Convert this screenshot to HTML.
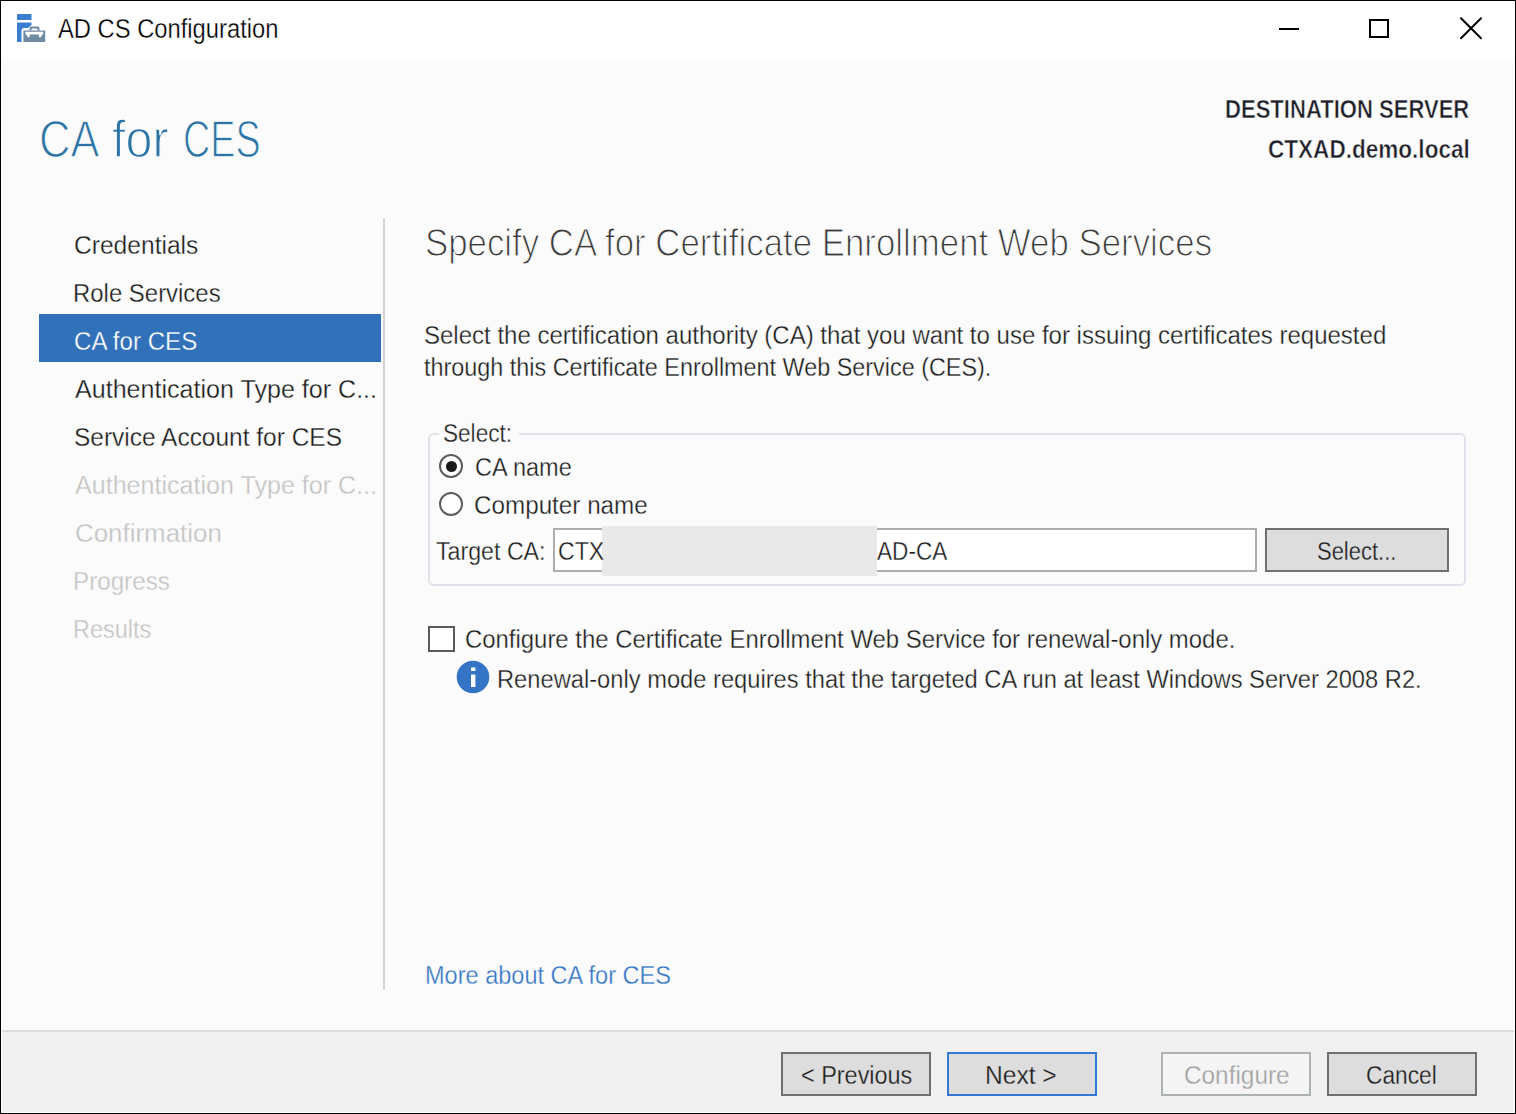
<!DOCTYPE html>
<html><head><meta charset="utf-8"><title>AD CS Configuration</title>
<style>
*{margin:0;padding:0;box-sizing:border-box}
html,body{width:1516px;height:1114px;overflow:hidden;background:#fbfbfb}
body{position:relative;font-family:"Liberation Sans", sans-serif}
.t{position:absolute;white-space:pre;line-height:1;transform-origin:0 0}
.abs{position:absolute}
</style></head>
<body>

<div class="abs" style="left:0;top:0;width:1516px;height:1114px;border:1px solid #000;background:#fbfbfb"></div>
<div class="abs" style="left:1px;top:1px;width:1514px;height:59px;background:#fff"></div>
<div class="abs" style="left:1px;top:60px;width:1px;height:1053px;background:#fff"></div>
<div class="abs" style="left:1514px;top:60px;width:1px;height:1053px;background:#fff"></div>
<div class="abs" style="left:1px;top:1112px;width:1514px;height:1px;background:#fff"></div>
<!-- footer -->
<div class="abs" style="left:2px;top:1030px;width:1512px;height:2px;background:#dcdcdc"></div>
<div class="abs" style="left:2px;top:1032px;width:1512px;height:80px;background:#f0f0f0"></div>
<!-- title icon -->
<svg class="abs" style="left:0;top:0" width="60" height="60" viewBox="0 0 60 60">
  <rect x="17" y="14" width="14.5" height="6" rx="0.6" fill="#3a7ed0"/>
  <path d="M17 22.5 H31.5 V25 L28 28 H24.5 Q21.5 28 21.5 31 V42 H17 Z" fill="#3a7ed0"/>
  <path d="M29.5 30.5 V28.5 Q29.5 26.5 31.5 26.5 H37.5 Q39.5 26.5 39.5 28.5 V30.5 H37.5 V29 Q37.5 28.5 37 28.5 H32 Q31.5 28.5 31.5 29 V30.5 Z" fill="#6f8aa3"/>
  <path d="M23.4 30.4 H45.2 V42 H23.4 Z M25.3 31.8 H43.3 V33.6 L40.6 37.3 H38.9 V34.4 H29.7 V37.3 H28 L25.3 33.6 Z" fill="#6f8aa3" fill-rule="evenodd"/>
</svg>
<!-- window controls -->
<div class="abs" style="left:1279px;top:28px;width:20px;height:2px;background:#000"></div>
<div class="abs" style="left:1369px;top:19px;width:20px;height:19px;border:2px solid #000"></div>
<svg class="abs" style="left:1455px;top:13px" width="32" height="32" viewBox="0 0 32 32">
  <path d="M6 5.3 L26 25.3 M26 5.3 L6 25.3" stroke="#000" stroke-width="2" stroke-linecap="round"/>
</svg>
<!-- nav highlight -->
<div class="abs" style="left:39px;top:314px;width:342px;height:48px;background:#3171b9"></div>
<!-- vertical separator -->
<div class="abs" style="left:383px;top:218px;width:2px;height:772px;background:#d2d2d2"></div>
<!-- group box -->
<div class="abs" style="left:428px;top:432.5px;width:1038px;height:153px;border:2px solid #dde3e8;border-radius:6px"></div>
<div class="abs" style="left:439px;top:428px;width:80px;height:12px;background:#fbfbfb"></div>
<!-- radios -->
<div class="abs" style="left:439px;top:454px;width:24px;height:24px;border:2px solid #5c5c5c;border-radius:50%;background:#fff"></div>
<div class="abs" style="left:445.5px;top:460.5px;width:11px;height:11px;border-radius:50%;background:#1a1a1a"></div>
<div class="abs" style="left:439px;top:492px;width:24px;height:24px;border:2px solid #5c5c5c;border-radius:50%;background:#fff"></div>
<!-- input -->
<div class="abs" style="left:553px;top:528px;width:704px;height:44px;border:2px solid #adadad;background:#fff"></div>
<div class="abs" style="left:602px;top:526px;width:275px;height:50px;background:#e9e9e9"></div>
<!-- select button -->
<div class="abs" style="left:1265px;top:528px;width:184px;height:44px;border:2px solid #707070;background:#dddddd"></div>
<!-- checkbox -->
<div class="abs" style="left:428px;top:626px;width:27px;height:26px;border:2px solid #5a5a5a;background:#fff"></div>
<!-- info icon -->
<svg class="abs" style="left:456px;top:660px" width="34" height="34" viewBox="0 0 34 34">
  <circle cx="17" cy="17" r="16.3" fill="#3474c4"/>
  <rect x="15" y="7.5" width="4.4" height="3.5" fill="#fff"/>
  <rect x="15" y="14.5" width="4.4" height="12.5" fill="#fff"/>
</svg>
<!-- footer buttons -->
<div class="abs" style="left:781px;top:1052px;width:150px;height:44px;border:2px solid #707070;background:#dddddd"></div>
<div class="abs" style="left:947px;top:1052px;width:150px;height:44px;border:2px solid #3279d6;background:#dddddd"></div>
<div class="abs" style="left:1161px;top:1052px;width:150px;height:44px;border:2px solid #adb2b5;background:#f4f4f4"></div>
<div class="abs" style="left:1327px;top:1052px;width:150px;height:44px;border:2px solid #707070;background:#dddddd"></div>

<div id="title" class="t" style="left:57.76px;top:15.54px;font-size:27px;color:#000000;font-weight:400;transform:scaleX(0.8795);-webkit-text-stroke:0.3px #ffffff">AD CS Configuration</div>
<div id="bigCA" class="t" style="left:38.50px;top:114.43px;font-size:51px;color:#2c74a5;font-weight:400;transform:scaleX(0.8530);-webkit-text-stroke:1.3px #fbfbfb">CA</div>
<div id="bigfor" class="t" style="left:112.27px;top:114.43px;font-size:51px;color:#2c74a5;font-weight:400;transform:scaleX(0.9503);-webkit-text-stroke:1.3px #fbfbfb">for</div>
<div id="bigCES" class="t" style="left:182.53px;top:114.43px;font-size:51px;color:#2c74a5;font-weight:400;transform:scaleX(0.7394);-webkit-text-stroke:1.3px #fbfbfb">CES</div>
<div id="dest" class="t" style="left:1225.38px;top:97.21px;font-size:25.5px;color:#1e1e28;font-weight:700;transform:scaleX(0.8649);-webkit-text-stroke:0.5px #fbfbfb">DESTINATION SERVER</div>
<div id="host" class="t" style="left:1268.34px;top:137.21px;font-size:25.5px;color:#1e1e28;font-weight:700;transform:scaleX(0.8845);-webkit-text-stroke:0.5px #fbfbfb">CTXAD.demo.local</div>
<div id="n1" class="t" style="left:74.08px;top:232.29px;font-size:26px;color:#1a1a1a;font-weight:400;transform:scaleX(0.9457);-webkit-text-stroke:0.3px #fbfbfb">Credentials</div>
<div id="n2" class="t" style="left:73.20px;top:280.19px;font-size:26px;color:#1a1a1a;font-weight:400;transform:scaleX(0.9203);-webkit-text-stroke:0.3px #fbfbfb">Role Services</div>
<div id="n3" class="t" style="left:74.12px;top:328.19px;font-size:26px;color:#ffffff;font-weight:400;transform:scaleX(0.9270);-webkit-text-stroke:0.3px #3171b9">CA for CES</div>
<div id="n4" class="t" style="left:75.02px;top:376.19px;font-size:26px;color:#1a1a1a;font-weight:400;transform:scaleX(0.9646);-webkit-text-stroke:0.3px #fbfbfb">Authentication Type for C...</div>
<div id="n5" class="t" style="left:74.49px;top:424.19px;font-size:26px;color:#1a1a1a;font-weight:400;transform:scaleX(0.9414);-webkit-text-stroke:0.3px #fbfbfb">Service Account for CES</div>
<div id="n6" class="t" style="left:75.02px;top:472.19px;font-size:26px;color:#c4c4c4;font-weight:400;transform:scaleX(0.9646);-webkit-text-stroke:0.3px #fbfbfb">Authentication Type for C...</div>
<div id="n7" class="t" style="left:74.99px;top:520.19px;font-size:26px;color:#c4c4c4;font-weight:400;transform:scaleX(0.9966);-webkit-text-stroke:0.3px #fbfbfb">Confirmation</div>
<div id="n8" class="t" style="left:73.18px;top:568.19px;font-size:26px;color:#c4c4c4;font-weight:400;transform:scaleX(0.9307);-webkit-text-stroke:0.3px #fbfbfb">Progress</div>
<div id="n9" class="t" style="left:73.24px;top:616.19px;font-size:26px;color:#c4c4c4;font-weight:400;transform:scaleX(0.9036);-webkit-text-stroke:0.3px #fbfbfb">Results</div>
<div id="head" class="t" style="left:424.72px;top:223.73px;font-size:38px;color:#3a3a3a;font-weight:400;transform:scaleX(0.9164);-webkit-text-stroke:1.1px #fbfbfb">Specify CA for Certificate Enrollment Web Services</div>
<div id="p1" class="t" style="left:423.93px;top:321.79px;font-size:26px;color:#1e1e1e;font-weight:400;transform:scaleX(0.9235);-webkit-text-stroke:0.3px #fbfbfb">Select the certification authority (CA) that you want to use for issuing certificates requested</div>
<div id="p2" class="t" style="left:423.87px;top:353.79px;font-size:26px;color:#1e1e1e;font-weight:400;transform:scaleX(0.8990);-webkit-text-stroke:0.3px #fbfbfb">through this Certificate Enrollment Web Service (CES).</div>
<div id="sel" class="t" style="left:443.37px;top:419.79px;font-size:26px;color:#1e1e1e;font-weight:400;transform:scaleX(0.8684);-webkit-text-stroke:0.3px #fbfbfb">Select:</div>
<div id="r1" class="t" style="left:474.55px;top:454.09px;font-size:26px;color:#1e1e1e;font-weight:400;transform:scaleX(0.9049);-webkit-text-stroke:0.3px #fbfbfb">CA name</div>
<div id="r2" class="t" style="left:473.93px;top:491.99px;font-size:26px;color:#1e1e1e;font-weight:400;transform:scaleX(0.9320);-webkit-text-stroke:0.3px #fbfbfb">Computer name</div>
<div id="tca" class="t" style="left:435.86px;top:537.99px;font-size:26px;color:#1e1e1e;font-weight:400;transform:scaleX(0.8917);-webkit-text-stroke:0.3px #fbfbfb">Target CA:</div>
<div id="ctx" class="t" style="left:557.69px;top:537.89px;font-size:26px;color:#1e1e1e;font-weight:400;transform:scaleX(0.8900);-webkit-text-stroke:0.3px #ffffff">CTX</div>
<div id="adca" class="t" style="left:877.07px;top:537.89px;font-size:26px;color:#1e1e1e;font-weight:400;transform:scaleX(0.8689);-webkit-text-stroke:0.3px #ffffff">AD-CA</div>
<div id="selb" class="t" style="left:1317.05px;top:537.99px;font-size:26px;color:#1e1e1e;font-weight:400;transform:scaleX(0.8445);-webkit-text-stroke:0.3px #dddddd">Select...</div>
<div id="chk" class="t" style="left:464.71px;top:625.69px;font-size:26px;color:#1e1e1e;font-weight:400;transform:scaleX(0.9196);-webkit-text-stroke:0.3px #fbfbfb">Configure the Certificate Enrollment Web Service for renewal-only mode.</div>
<div id="info" class="t" style="left:496.99px;top:666.09px;font-size:26px;color:#1e1e1e;font-weight:400;transform:scaleX(0.9114);-webkit-text-stroke:0.3px #fbfbfb">Renewal-only mode requires that the targeted CA run at least Windows Server 2008 R2.</div>
<div id="link" class="t" style="left:425.18px;top:961.59px;font-size:26px;color:#3375c4;font-weight:400;transform:scaleX(0.9052);-webkit-text-stroke:0.3px #fbfbfb">More about CA for CES</div>
<div id="bprev" class="t" style="left:801.32px;top:1061.99px;font-size:26px;color:#1e1e1e;font-weight:400;transform:scaleX(0.9010);-webkit-text-stroke:0.3px #dddddd">&lt; Previous</div>
<div id="bnext" class="t" style="left:984.87px;top:1061.99px;font-size:26px;color:#1e1e1e;font-weight:400;transform:scaleX(0.9453);-webkit-text-stroke:0.3px #dddddd">Next &gt;</div>
<div id="bconf" class="t" style="left:1183.52px;top:1061.99px;font-size:26px;color:#a0a0a0;font-weight:400;transform:scaleX(0.9364);-webkit-text-stroke:0.3px #f4f4f4">Configure</div>
<div id="bcanc" class="t" style="left:1366.11px;top:1061.99px;font-size:26px;color:#1e1e1e;font-weight:400;transform:scaleX(0.8735);-webkit-text-stroke:0.3px #dddddd">Cancel</div>
</body></html>
